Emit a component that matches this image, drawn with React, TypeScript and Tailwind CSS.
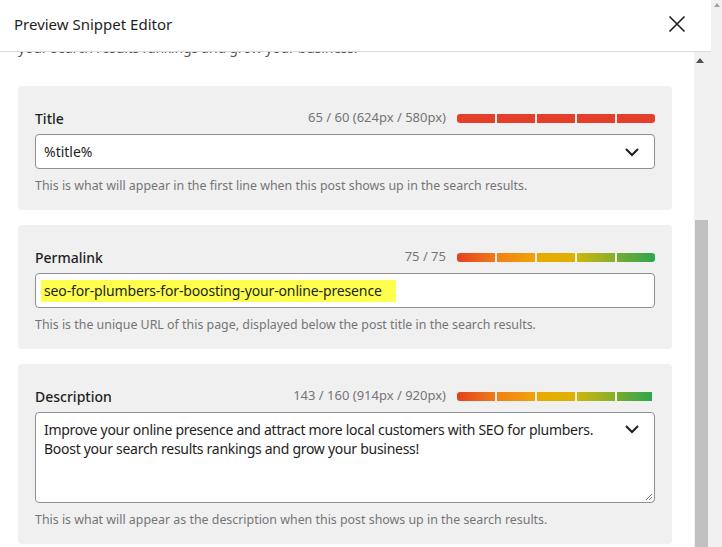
import React from "react";

const FONT = { fontFamily: '"Noto Sans", "Open Sans", sans-serif' };

const GRAD = [
  ["#e2421f", "#f07a17"],
  ["#f28016", "#f0a20a"],
  ["#eba800", "#dcb200"],
  ["#cdb60c", "#86ae2c"],
  ["#76ab30", "#2ea64c"],
];

function Bar({ red, fill }: { red?: boolean; fill: number }) {
  return (
    <div className="flex w-[198px] h-[9px] gap-[2px] rounded-[3px] overflow-hidden">
      {GRAD.map((g, i) => {
        const segFill = Math.max(0, Math.min(1, fill * 5 - i));
        return (
          <div key={i} className="flex-1 h-full bg-[#f0f0f1] flex">
            <div
              className="h-full"
              style={{
                width: `${segFill * 100}%`,
                background: red ? "#e43f2b" : `linear-gradient(to right, ${g[0]}, ${g[1]})`,
              }}
            />
          </div>
        );
      })}
    </div>
  );
}

function Chevron() {
  return (
    <svg width="16" height="10" viewBox="0 0 16 10" className="shrink-0">
      <polyline points="2,2 8,8 14,2" fill="none" stroke="#1e1e1e" strokeWidth="2" />
    </svg>
  );
}

function Card({
  label,
  counter,
  children,
  help,
  red,
  fill,
}: {
  label: string;
  counter: string;
  children: React.ReactNode;
  help: string;
  red?: boolean;
  fill: number;
}) {
  return (
    <div className="bg-[#f0f0f1] rounded-[4px] px-[17px] pt-[22px] pb-[16px]">
      <div className="flex items-center h-5">
        <div className="text-[14px] font-medium text-[#1e1e1e] flex-1">{label}</div>
        <div className="text-[13px] text-[#757575] mr-[11px]">{counter}</div>
        <Bar red={red} fill={fill} />
      </div>
      <div className="mt-[6px]">{children}</div>
      <div className="mt-[9px] text-[12.4px] leading-4 text-[#757575]">{help}</div>
    </div>
  );
}

export default function App() {
  return (
    <div className="w-[722px] h-[547px] flex bg-white overflow-hidden text-[#1e1e1e]" style={FONT}>
      <div className="w-[711px] flex flex-col">
        <div className="h-[52px] shrink-0 border-b border-[#dcdcde] flex items-center pl-[14px] pr-[25px] pb-[3px] bg-white relative z-10">
          <div className="text-[15px] text-[#1e1e1e] flex-1">Preview Snippet Editor</div>
          <svg width="18" height="18" viewBox="0 0 18 18">
            <path d="M1.5 1.5 L16.5 16.5 M16.5 1.5 L1.5 16.5" stroke="#1e1e1e" strokeWidth="1.6" />
          </svg>
        </div>
        <div className="flex flex-1 min-h-0">
          <div className="w-[694px] overflow-hidden">
            <p className="-mt-[14px] leading-5 text-[14px] tracking-[-0.2px] text-[#50575e] pl-[18px]">
              your search results rankings and grow your business.
            </p>
            <div className="mt-7 pl-[18px] pr-[22px] flex flex-col gap-[15px]">
              <Card
                label="Title"
                counter="65 / 60 (624px / 580px)"
                help="This is what will appear in the first line when this post shows up in the search results."
                red
                fill={1}
              >
                <div className="h-[35px] bg-white border border-[#8c8f94] rounded-[4px] flex items-center pl-[8px] pr-[14px]">
                  <div className="flex-1 text-[14px] text-[#1e1e1e]">%title%</div>
                  <Chevron />
                </div>
              </Card>
              <Card
                label="Permalink"
                counter="75 / 75"
                help="This is the unique URL of this page, displayed below the post title in the search results."
                fill={1}
              >
                <div className="h-[35px] bg-white border border-[#8c8f94] rounded-[4px] flex items-center pl-[5px]">
                  <span className="bg-[#ffff4d] pl-[3px] pr-[14px] h-[22px] flex items-center text-[14px] tracking-[-0.14px] text-[#1e1e1e]">
                    seo-for-plumbers-for-boosting-your-online-presence
                  </span>
                </div>
              </Card>
              <Card
                label="Description"
                counter="143 / 160 (914px / 920px)"
                help="This is what will appear as the description when this post shows up in the search results."
                fill={0.985}
              >
                <div className="h-[91px] bg-white border border-[#8c8f94] rounded-[4px] flex items-start pl-[8px] pr-[14px] pt-[7px] relative">
                  <div className="flex-1 text-[14px] leading-[19px] tracking-[-0.28px] text-[#1e1e1e]">
                    Improve your online presence and attract more local customers with SEO for plumbers.
                    <br />
                    Boost your search results rankings and grow your business!
                  </div>
                  <div className="pt-[4px]">
                    <Chevron />
                  </div>
                  <svg width="9" height="9" viewBox="0 0 9 9" className="absolute right-[1px] bottom-[1px]">
                    <path d="M8 2 L2 8 M8 5 L5 8" stroke="#757575" strokeWidth="1" />
                  </svg>
                </div>
              </Card>
            </div>
          </div>
          <div className="w-[17px] bg-[#f1f1f1] flex flex-col items-center">
            <svg width="8" height="5" viewBox="0 0 8 5" className="mt-[6px] ml-[-5px]">
              <polygon points="4,0 8,5 0,5" fill="#505050" />
            </svg>
            <div className="mt-[157px] w-[13px] ml-[-2px] flex-1 bg-[#c1c1c1]" />
          </div>
        </div>
      </div>
      <div className="w-[11px] bg-[#f1f1f1] flex flex-col items-center">
        <svg width="6" height="4" viewBox="0 0 6 4" className="mt-[3px]">
          <polygon points="3,0 6,4 0,4" fill="#a3a3a3" />
        </svg>
      </div>
    </div>
  );
}
